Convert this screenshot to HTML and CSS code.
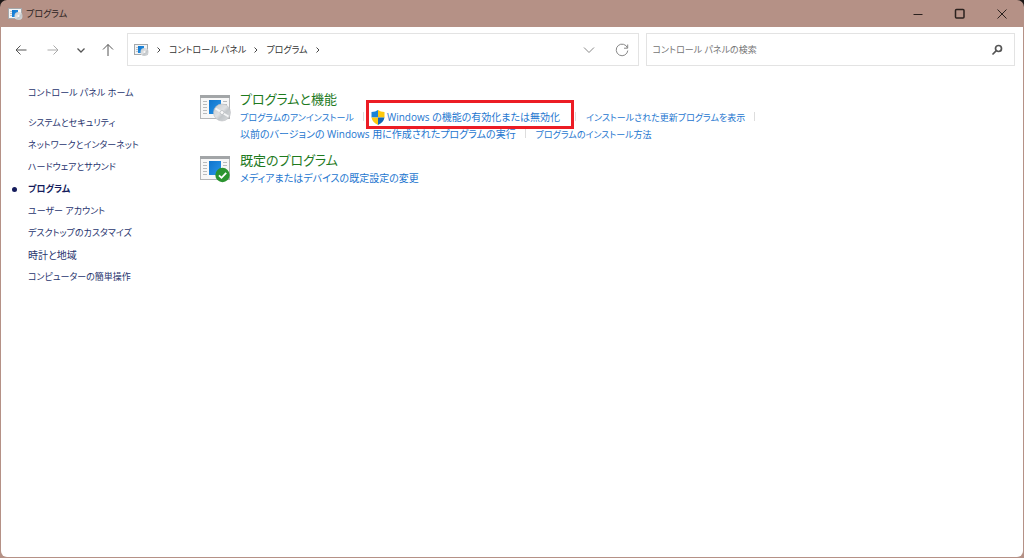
FILE: index.html
```html
<!DOCTYPE html>
<html lang="ja">
<head>
<meta charset="utf-8">
<meta name="viewport" content="width=device-width, initial-scale=1">
<title>プログラム</title>
<link rel="stylesheet" href="styles.css">
</head>
<body>
<svg class="defs" aria-hidden="true">
  <defs>
    <linearGradient id="blue" x1="0" y1="0" x2="1" y2="1"><stop offset="0" stop-color="#0f74cc"/><stop offset="1" stop-color="#2a95e8"/></linearGradient>
    <linearGradient id="disc" x1="0" y1="0" x2="1" y2="1"><stop offset="0" stop-color="#c4c8ca"/><stop offset=".45" stop-color="#dfe1e3"/><stop offset=".6" stop-color="#c2c6c9"/><stop offset="1" stop-color="#dadddf"/></linearGradient>
    <symbol id="panel" viewBox="0 0 32 28">
      <rect x=".500" y="1.500" width="29" height="23" fill="#f7f7f7" stroke="#b4b6b8"/>
      <rect x="0" y="1" width="30" height="3" fill="#a2a5a7"/>
      <path d="M3 7.500h4M3 10.500h4M3 13.500h4M3 16.500h4M3 19.500h4M23 7.500h4M23 10.500h4" stroke="#b8bbbd"/>
      <rect x="9" y="6" width="12" height="14" fill="url(#blue)"/>
    </symbol>
    <symbol id="programs" viewBox="0 0 32 28">
      <use href="#panel"/>
      <circle cx="22" cy="18.500" r="8.500" fill="url(#disc)" stroke="#bdc0c2" stroke-width=".6"/>
      <path d="M20.500 17.700L15.500 14.500M23.500 19.500l5 3" stroke="#f5f6f7" stroke-width="2"/>
      <circle cx="22" cy="18.500" r="2" fill="#fafafa" stroke="#b9bdc0" stroke-width=".8"/>
    </symbol>
    <symbol id="programs-small" viewBox="0 0 15 14">
      <rect x=".500" y="1.500" width="13" height="10" fill="#f3f4f5" stroke="#a4a8ab"/>
      <path d="M2 4.500h2M2 6.500h2M2 8.500h2" stroke="#c0c3c5"/>
      <rect x="4" y="3" width="6" height="7" fill="url(#blue)"/>
      <circle cx="10.500" cy="9" r="4" fill="url(#disc)"/>
      <circle cx="10.500" cy="9" r="1" fill="#fafafa"/>
    </symbol>
    <symbol id="defaults" viewBox="0 0 32 28">
      <use href="#panel"/>
      <circle cx="22.500" cy="20" r="7.200" fill="#2b9430"/>
      <path d="M19 20.300l2.500 2.500 4.700-5" fill="none" stroke="#fff" stroke-width="1.800"/>
    </symbol>
  </defs>
</svg>
<div class="window">
  <header class="titlebar">
    <svg class="small-icon" aria-hidden="true"><use href="#programs-small"/></svg>
    <h1 class="title">プログラム</h1>
    <button class="caption" aria-label="最小化"><svg viewBox="0 0 12 12"><path d="M1.500 6.500h9"/></svg></button>
    <button class="caption" aria-label="最大化"><svg class="bold" viewBox="0 0 12 12"><rect x="1.500" y="1.500" width="8.500" height="8.500" rx="1"/></svg></button>
    <button class="caption" aria-label="閉じる"><svg viewBox="0 0 12 12"><path d="M1.500 1.500l9 9M10.500 1.500l-9 9"/></svg></button>
  </header>
  <div class="toolbar">
    <nav class="history" aria-label="履歴">
      <button class="tool" aria-label="戻る"><svg viewBox="0 0 14 14"><path d="M12.500 7H2M6.500 2.500L2 7l4.500 4.500"/></svg></button>
      <button class="tool pale" aria-label="進む"><svg viewBox="0 0 14 14"><path d="M1.500 7H12M7.500 2.500L12 7l-4.500 4.500"/></svg></button>
      <button class="tool narrow" aria-label="最近表示した場所"><svg viewBox="0 0 14 14"><path d="M3.500 5.500L7 9l3.500-3.500"/></svg></button>
      <button class="tool" aria-label="上へ"><svg viewBox="0 0 14 14"><path d="M7 13V1.500M2 6.500l5-5 5 5"/></svg></button>
    </nav>
    <div class="address">
      <svg class="small-icon" aria-hidden="true"><use href="#programs-small"/></svg>
      <svg class="chev" viewBox="0 0 6 8" aria-hidden="true"><path d="M1.500 1.500L4 4 1.500 6.500"/></svg>
      <a href="#">コントロール パネル</a>
      <svg class="chev" viewBox="0 0 6 8" aria-hidden="true"><path d="M1.500 1.500L4 4 1.500 6.500"/></svg>
      <a href="#">プログラム</a>
      <svg class="chev" viewBox="0 0 6 8" aria-hidden="true"><path d="M1.500 1.500L4 4 1.500 6.500"/></svg>
      <span class="spring"></span>
      <button class="tool gray" aria-label="以前の場所"><svg viewBox="0 0 14 14"><path d="M2 4.500l5 5 5-5"/></svg></button>
      <button class="tool gray" aria-label="更新"><svg viewBox="0 0 14 14"><path d="M12.500 5A5.800 5.800 0 1 0 12.800 7.500M12.700 1.500V5.200H9"/></svg></button>
    </div>
    <form class="search">
      <input type="search" aria-label="コントロール パネルの検索" placeholder="コントロール パネルの検索">
      <button class="tool find" type="button" aria-label="検索"><svg viewBox="0 0 14 14"><circle cx="8.500" cy="5.500" r="3"/><path d="M6.300 7.700L2.500 11.500"/></svg></button>
    </form>
  </div>
  <div class="content">
    <nav class="sidebar" aria-label="カテゴリ">
      <a class="home" href="#">コントロール パネル ホーム</a>
      <a href="#">システムとセキュリティ</a>
      <a href="#">ネットワークとインターネット</a>
      <a href="#">ハードウェアとサウンド</a>
      <a class="current" href="#" aria-current="page">プログラム</a>
      <a href="#">ユーザー アカウント</a>
      <a href="#">デスクトップのカスタマイズ</a>
      <a class="kanji" href="#">時計と地域</a>
      <a href="#">コンピューターの簡単操作</a>
    </nav>
    <main class="main">
      <section class="category">
        <svg class="large-icon" aria-hidden="true"><use href="#programs"/></svg>
        <div class="details">
          <h2><a href="#">プログラムと機能</a></h2>
          <div class="links">
            <a href="#">プログラムのアンインストール</a>
            <a class="marked kanji" href="#"><svg class="shield" viewBox="0 0 14 15" aria-hidden="true"><path d="M7 0Q4.500 2 .500 2V7.500H7Z" fill="#1783d8"/><path d="M7 0Q9.500 2 13.500 2V7.500H7Z" fill="#fcc80e"/><path d="M.500 7.500H7V15Q1.500 12.500.500 7.500Z" fill="#fcc80e"/><path d="M13.500 7.500H7V15Q12.500 12.500 13.500 7.500Z" fill="#1266b8"/></svg>Windows の機能の有効化または無効化</a>
            <a class="last" href="#">インストールされた更新プログラムを表示</a>
          </div>
          <div class="links">
            <a class="kanji" href="#">以前のバージョンの Windows 用に作成されたプログラムの実行</a>
            <a href="#">プログラムのインストール方法</a>
          </div>
        </div>
      </section>
      <section class="category">
        <svg class="large-icon" aria-hidden="true"><use href="#defaults"/></svg>
        <div class="details">
          <h2><a href="#">既定のプログラム</a></h2>
          <div class="links"><a class="kanji" href="#">メディアまたはデバイスの既定設定の変更</a></div>
        </div>
      </section>
    </main>
  </div>
</div>
</body>
</html>
```

FILE: styles.css
```css
* { box-sizing: border-box; }

body {
  margin: 0;
  background: #1b1716;
  font-family: "Open Sans", "Noto Sans CJK JP", sans-serif;
  font-size: 9px;
  line-height: 16px;
  font-feature-settings: "palt";
}

a { color: inherit; text-decoration: none; white-space: nowrap; }
button { border: 0; padding: 0; background: none; color: inherit; font: inherit; }
svg { flex: none; }
button svg, .chev { fill: none; stroke: currentColor; }

.defs { position: absolute; width: 0; height: 0; }
.kanji { font-size: 10px; }

.window {
  display: flex;
  flex-direction: column;
  min-height: 100vh;
  padding: 0 1px 1px;
  border-radius: 7px 7px 0 0;
  background: #b59186;
}

.titlebar {
  display: flex;
  align-items: center;
  height: 27px;
  padding-left: 7px;
  color: #2b211e;
}

.title { flex: 1; margin: 0 0 0 3px; font-size: 9px; font-weight: 400; }
.small-icon { width: 15px; height: 14px; }

.caption { display: grid; place-items: center; width: 42px; height: 27px; }
.caption svg { width: 12px; height: 12px; }
.caption .bold { stroke-width: 1.5; }

.toolbar {
  display: flex;
  padding: 6px 8px 6px 4px;
  background: #fff;
}

.history { display: flex; align-items: center; width: 122px; color: #555; }

.tool { display: grid; place-items: center; width: 26px; height: 28px; }
.tool svg { width: 14px; height: 14px; }
.history .tool { width: 32px; }
.history .narrow { width: 23px; }
.history .narrow svg { stroke-width: 1.3; }
.history .pale { color: #aaa; }
.gray { color: #888; }

.address, .search {
  display: flex;
  align-items: center;
  height: 33px;
  border: 1px solid #e3e3e3;
}

.address { flex: 514; gap: 7px; padding: 0 3px 0 6px; color: #333; }
.spring { flex: 1; }
.chev { width: 6px; height: 8px; color: #444; }

.search { flex: 367; margin-left: 7px; padding: 0 4px 0 6px; }
.search input {
  flex: 1;
  min-width: 0;
  padding: 0;
  border: 0;
  outline: 0;
  background: none;
  font: inherit;
  font-feature-settings: inherit;
}
.search input::placeholder { color: #757575; opacity: 1; }
.find { color: #555; }
.find svg { stroke-width: 1.7; }

.content {
  display: flex;
  flex: 1;
  padding-top: 13px;
  border-radius: 0 0 6px 6px;
  background: #fff;
}

.sidebar { display: flex; flex-direction: column; gap: 6px; width: 199px; padding-left: 27px; color: #27346e; }
.sidebar .home { margin-bottom: 8px; }
.sidebar .current { position: relative; color: #151c5c; font-weight: 700; }
.current::before {
  content: "";
  position: absolute;
  top: 6px;
  left: -16px;
  width: 5px;
  height: 5px;
  border-radius: 50%;
  background: #151c5c;
}

.main { display: flex; flex: 1; flex-direction: column; gap: 7px; padding-top: 4px; }
.category { display: flex; gap: 8px; }
.large-icon { width: 32px; height: 28px; margin-top: 5px; }

h2 { margin: 0; color: #1e7a1e; font-size: 13px; font-weight: 400; line-height: 20px; }

.links { display: flex; gap: 20px; color: #2476cf; line-height: 17px; }
.links a { position: relative; }
.links a:not(:last-child)::after, .links .last::after {
  content: "";
  position: absolute;
  top: 3px;
  right: -10px;
  width: 1px;
  height: 9px;
  background: #ddd;
}

.links .marked { display: flex; align-items: center; gap: 2px; margin-left: -3px; padding-right: 6px; }
.shield { width: 14px; height: 15px; }
.marked::before {
  content: "";
  position: absolute;
  inset: -9px -8px -3px -5px;
  border: 3px solid #ec1c24;
}
```
